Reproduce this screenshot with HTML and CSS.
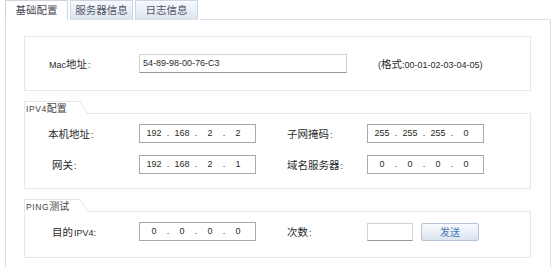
FILE: index.html
```html
<!DOCTYPE html>
<html lang="zh">
<head>
<meta charset="utf-8">
<title>配置</title>
<link rel="stylesheet" href="styles.css">
</head>
<body>
<div class="tabs">
  <div class="tab active">基础配置</div>
  <div class="tab">服务器信息</div>
  <div class="tab">日志信息</div>
  <div class="tab-fill"></div>
</div>
<div class="panel">
  <div class="box mac-box">
    <span class="label"><span class="n">Mac</span>地址<span class="n">:</span></span>
    <div class="text-input mac-input n">54-89-98-00-76-C3</div>
    <span class="hint"><span class="n">(</span>格式<span class="n">:00-01-02-03-04-05)</span></span>
  </div>

  <div class="group">
    <div class="group-head"><div class="legend"><span class="n">IPV4</span>配置</div><div class="head-fill"></div></div>
    <div class="group-body grid">
      <span class="label">本机地址<span class="n">:</span></span>
      <div class="ip"><span>192</span><i>.</i><span>168</span><i>.</i><span>2</span><i>.</i><span>2</span></div>
      <span class="label">子网掩码<span class="n">:</span></span>
      <div class="ip"><span>255</span><i>.</i><span>255</span><i>.</i><span>255</span><i>.</i><span>0</span></div>
      <span class="label ind">网关<span class="n">:</span></span>
      <div class="ip"><span>192</span><i>.</i><span>168</span><i>.</i><span>2</span><i>.</i><span>1</span></div>
      <span class="label">域名服务器<span class="n">:</span></span>
      <div class="ip"><span>0</span><i>.</i><span>0</span><i>.</i><span>0</span><i>.</i><span>0</span></div>
    </div>
  </div>

  <div class="group">
    <div class="group-head"><div class="legend"><span class="n">PING</span>测试</div><div class="head-fill"></div></div>
    <div class="group-body grid ping">
      <span class="label ind">目的<span class="n">IPV4:</span></span>
      <div class="ip"><span>0</span><i>.</i><span>0</span><i>.</i><span>0</span><i>.</i><span>0</span></div>
      <span class="label">次数<span class="n">:</span></span>
      <div class="count-row"><div class="text-input count-input"></div><button class="btn">发送</button></div>
    </div>
  </div>
</div>
</body>
</html>
```
FILE: styles.css
```css
* { box-sizing: border-box; }
html, body { margin: 0; padding: 0; }
body {
  width: 555px;
  height: 267px;
  overflow: hidden;
  background: #ffffff;
  font-family: "Noto Sans CJK SC", "Noto Sans", sans-serif;
  font-size: 10.5px;
  color: #2a2a2a;
}
.n {
  font-family: "Liberation Sans", "Noto Sans", sans-serif;
  font-size: 9px;
}
.tabs {
  display: flex;
  height: 20px;
  padding-left: 5px;
}
.tab {
  height: 20px;
  width: 63px;
  margin-right: 2px;
  border: 1px solid #cdd5df;
  border-bottom: none;
  background: linear-gradient(#f7f9fc, #dce6f2);
  color: #556;
  font-size: 10.5px;
  line-height: 18px;
  text-align: center;
}
.tab.active {
  background: #fff;
  color: #445;
}
.tab-fill {
  flex: 1;
  border-bottom: 1px solid #dcdfe3;
  margin-right: 4px;
}
.tab:not(.active) { border-bottom: 1px solid #dcdfe3; }
.panel {
  margin-left: 5px;
  width: 546px;
  height: 260px;
  border: 1px solid #d9dee5;
  border-top: none;
  padding: 16px 19px 0 18px;
}
.box {
  border: 1px solid #e8e8e8;
  height: 55px;
  display: flex;
  align-items: center;
  padding-left: 23px;
}
.label {
  white-space: nowrap;
}
.label .n { margin-left: 1px; }
.ind { padding-left: 4px; }
.mac-box .label { width: 91px; }
.text-input {
  height: 19px;
  border: 1px solid #d2d2d2;
  border-bottom-color: #9a9a9a;
  background: #fff;
  padding-left: 3px;
  line-height: 17px;
}
.mac-input { width: 208px; }
.hint {
  margin-left: 31px;
}
.group { margin-top: 10px; }
.group-head {
  display: flex;
  height: 13px;
}
.legend {
  position: relative;
  width: 55px;
  border-top: 1px solid #e6e6e6;
  border-left: 1px solid #e6e6e6;
  font-size: 10px;
  line-height: 12px;
  color: #444;
  padding-left: 1px;
  white-space: nowrap;
}
.legend .n { font-size: 8.5px; letter-spacing: 0.6px; }
.legend::after {
  content: "";
  position: absolute;
  right: -1px;
  top: -1px;
  width: 1px;
  height: 13px;
  background: #e6e6e6;
  transform-origin: top left;
  transform: skewX(34deg);
}
.head-fill {
  flex: 1;
  margin-left: 8px;
  border-bottom: 1px solid #e6e6e6;
  border-right: 1px solid #e6e6e6;
  margin-top: 12px;
}
.group-body {
  border: 1px solid #e6e6e6;
  border-top: none;
  padding: 10px 0 14px 23px;
}
.grid {
  display: grid;
  grid-template-columns: 91px 117px 31px 80px 117px;
  grid-auto-rows: 19px;
  row-gap: 12px;
  align-items: center;
}
.grid > .label:nth-of-type(2n) { grid-column: 4; }
.ping { padding-bottom: 16px; }
.ip {
  height: 19px;
  border: 1px solid #a9a9a9;
  background: #fff;
  display: flex;
  padding-left: 2px;
  font-family: "Liberation Sans", sans-serif;
  font-size: 9px;
  line-height: 17px;
}
.grid > .ip:nth-of-type(1) { grid-column: 2; }
.ip span { width: 24px; text-align: center; }
.ip i { width: 4px; font-style: normal; text-align: center; }
.count-row {
  display: flex;
  gap: 8px;
}
.count-input { width: 46px; height: 18px; }
.btn {
  width: 58px;
  height: 18px;
  border: 1px solid #b7c4d5;
  border-radius: 2px;
  background: linear-gradient(#f8fafd, #dbe4ef);
  color: #4d79b4;
  font-family: "Noto Sans CJK SC", sans-serif;
  font-size: 10px;
  line-height: 16px;
  padding: 0;
}
```
